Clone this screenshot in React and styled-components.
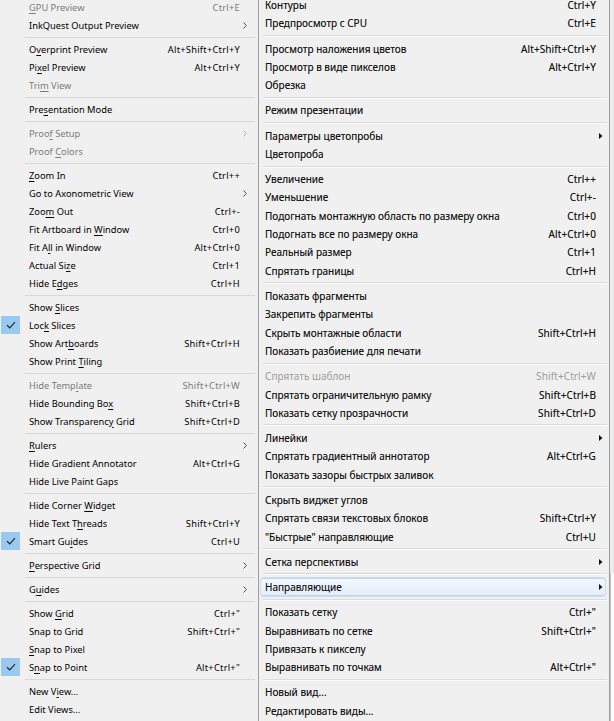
import React from 'react';
import styled, { createGlobalStyle } from 'styled-components';

const GlobalStyle = createGlobalStyle`
  html, body {
    margin: 0;
    padding: 0;
    background: #f0f0f0;
    overflow: hidden;
  }
`;

const SEP = { sep: true };

const leftItems = [
  { label: 'GPU Preview', u: 0, sc: 'Ctrl+E', off: true },
  { label: 'InkQuest Output Preview', sub: true },
  SEP,
  { label: 'Overprint Preview', u: 1, sc: 'Alt+Shift+Ctrl+Y' },
  { label: 'Pixel Preview', u: 2, sc: 'Alt+Ctrl+Y' },
  { label: 'Trim View', u: 3, off: true },
  SEP,
  { label: 'Presentation Mode', u: 3 },
  SEP,
  { label: 'Proof Setup', u: 4, sub: true, off: true },
  { label: 'Proof Colors', u: 6, off: true },
  SEP,
  { label: 'Zoom In', u: 0, sc: 'Ctrl++' },
  { label: 'Go to Axonometric View', sub: true },
  { label: 'Zoom Out', u: 3, sc: 'Ctrl+-' },
  { label: 'Fit Artboard in Window', u: 16, sc: 'Ctrl+0' },
  { label: 'Fit All in Window', u: 5, sc: 'Alt+Ctrl+0' },
  { label: 'Actual Size', u: 9, sc: 'Ctrl+1' },
  { label: 'Hide Edges', u: 6, sc: 'Ctrl+H' },
  SEP,
  { label: 'Show Slices', u: 5 },
  { label: 'Lock Slices', u: 3, checked: true },
  { label: 'Show Artboards', u: 8, sc: 'Shift+Ctrl+H' },
  { label: 'Show Print Tiling', u: 11 },
  SEP,
  { label: 'Hide Template', u: 9, sc: 'Shift+Ctrl+W', off: true },
  { label: 'Hide Bounding Box', u: 16, sc: 'Shift+Ctrl+B' },
  { label: 'Show Transparency Grid', u: 16, sc: 'Shift+Ctrl+D' },
  SEP,
  { label: 'Rulers', u: 0, sub: true },
  { label: 'Hide Gradient Annotator', sc: 'Alt+Ctrl+G' },
  { label: 'Hide Live Paint Gaps' },
  SEP,
  { label: 'Hide Corner Widget', u: 12 },
  { label: 'Hide Text Threads', u: 11, sc: 'Shift+Ctrl+Y' },
  { label: 'Smart Guides', u: 8, sc: 'Ctrl+U', checked: true },
  SEP,
  { label: 'Perspective Grid', u: 0, sub: true },
  SEP,
  { label: 'Guides', u: 1, sub: true },
  SEP,
  { label: 'Show Grid', u: 5, sc: 'Ctrl+"' },
  { label: 'Snap to Grid', sc: 'Shift+Ctrl+"' },
  { label: 'Snap to Pixel', u: 0 },
  { label: 'Snap to Point', u: 1, sc: 'Alt+Ctrl+"', checked: true },
  SEP,
  { label: 'New View...', u: 5 },
  { label: 'Edit Views...' },
];

const rightItems = [
  { label: 'Контуры', sc: 'Ctrl+Y' },
  { label: 'Предпросмотр с CPU', sc: 'Ctrl+E' },
  SEP,
  { label: 'Просмотр наложения цветов', sc: 'Alt+Shift+Ctrl+Y' },
  { label: 'Просмотр в виде пикселов', sc: 'Alt+Ctrl+Y' },
  { label: 'Обрезка' },
  SEP,
  { label: 'Режим презентации' },
  SEP,
  { label: 'Параметры цветопробы', sub: true },
  { label: 'Цветопроба' },
  SEP,
  { label: 'Увеличение', sc: 'Ctrl++' },
  { label: 'Уменьшение', sc: 'Ctrl+-' },
  { label: 'Подогнать монтажную область по размеру окна', sc: 'Ctrl+0' },
  { label: 'Подогнать все по размеру окна', sc: 'Alt+Ctrl+0' },
  { label: 'Реальный размер', sc: 'Ctrl+1' },
  { label: 'Спрятать границы', sc: 'Ctrl+H' },
  SEP,
  { label: 'Показать фрагменты' },
  { label: 'Закрепить фрагменты' },
  { label: 'Скрыть монтажные области', sc: 'Shift+Ctrl+H' },
  { label: 'Показать разбиение для печати' },
  SEP,
  { label: 'Спрятать шаблон', sc: 'Shift+Ctrl+W', off: true },
  { label: 'Спрятать ограничительную рамку', sc: 'Shift+Ctrl+B' },
  { label: 'Показать сетку прозрачности', sc: 'Shift+Ctrl+D' },
  SEP,
  { label: 'Линейки', sub: true },
  { label: 'Спрятать градиентный аннотатор', sc: 'Alt+Ctrl+G' },
  { label: 'Показать зазоры быстрых заливок' },
  SEP,
  { label: 'Скрыть виджет углов' },
  { label: 'Спрятать связи текстовых блоков', sc: 'Shift+Ctrl+Y' },
  { label: '"Быстрые" направляющие', sc: 'Ctrl+U' },
  SEP,
  { label: 'Сетка перспективы', sub: true },
  SEP,
  { label: 'Направляющие', sub: true, active: true },
  SEP,
  { label: 'Показать сетку', sc: 'Ctrl+"' },
  { label: 'Выравнивать по сетке', sc: 'Shift+Ctrl+"' },
  { label: 'Привязать к пикселу' },
  { label: 'Выравнивать по точкам', sc: 'Alt+Ctrl+"' },
  SEP,
  { label: 'Новый вид...' },
  { label: 'Редактировать виды...' },
];

const Frame = styled.div`
  display: flex;
  height: 721px;
  overflow: hidden;
  font-family: 'Noto Sans', 'Open Sans', sans-serif;
`;

/* ---------- left: Windows 10 style menu ---------- */

const LeftMenu = styled.div`
  width: 258px;
  flex-shrink: 0;
  background: #f0f0f0;
`;

const LeftList = styled.div`
  margin-top: -2px;
  display: flex;
  flex-direction: column;
`;

const LeftRow = styled.div`
  display: flex;
  align-items: center;
  height: 18px;
  font-size: 9.3px;
  color: ${({ $off }) => ($off ? '#7c7c7c' : '#000')};
  white-space: nowrap;
`;

const CheckCell = styled.div`
  width: 25px;
  height: 18px;
  flex-shrink: 0;
  display: flex;
  align-items: center;
`;

const CheckBox = styled.div`
  width: 19px;
  height: 18px;
  margin-left: 1px;
  background: #99c9ef;
  display: flex;
  align-items: center;
  justify-content: center;
`;

const LeftLabel = styled.span`
  flex: 1;
  padding-left: 4px;
`;

const LeftShortcut = styled.span`
  text-align: right;
  letter-spacing: 0.25px;
`;

const LeftArrowCell = styled.div`
  width: 18px;
  flex-shrink: 0;
  display: flex;
  align-items: center;
  padding-left: 3px;
  box-sizing: border-box;
`;

const LeftSep = styled.div`
  height: 6px;
  margin: 0 3px 0 25px;
  display: flex;
  align-items: center;
  &::after {
    content: '';
    flex: 1;
    height: 1px;
    background: #d7d7d7;
  }
`;

const Mn = styled.span`
  text-decoration: underline;
  text-underline-offset: 1.5px;
  text-decoration-thickness: 1px;
`;

/* ---------- right: Windows 7 style menu ---------- */

const RightMenu = styled.div`
  width: 352px;
  flex-shrink: 0;
  box-sizing: border-box;
  background: #f0f0f0;
  border-left: 1px solid #9c9c9c;
  border-right: 1px solid #9c9c9c;
`;

const RightList = styled.div`
  margin-top: -4.2px;
  display: flex;
  flex-direction: column;
`;

const RightRow = styled.div`
  display: flex;
  align-items: center;
  height: 18.33px;
  box-sizing: border-box;
  margin: 0 4px 0 2px;
  padding-left: 4px;
  font-size: 10px;
  color: ${({ $off }) => ($off ? '#9d9d9d' : '#141414')};
  text-shadow: ${({ $off }) => ($off ? 'none' : '0 0 0.5px rgba(0, 0, 0, 0.45)')};
  white-space: nowrap;
  border-top: 1px solid ${({ $active }) => ($active ? '#bcd5f1' : 'transparent')};
  border-bottom: 1px solid ${({ $active }) => ($active ? '#bcd5f1' : 'transparent')};
  border-radius: 3px;
  background: ${({ $active }) =>
    $active ? 'linear-gradient(#f4f8fd, #e3edf9)' : 'transparent'};
  box-shadow: ${({ $active }) => ($active ? '0 0 0 1px #c9ddf4' : 'none')};
`;

const RightLabel = styled.span`
  flex: 1;
`;

const RightShortcut = styled.span`
  text-align: right;
  letter-spacing: 0.1px;
`;

const RightArrowCell = styled.div`
  width: 9px;
  flex-shrink: 0;
  display: flex;
  align-items: center;
  padding-left: 3px;
  box-sizing: border-box;
`;

const RightSep = styled.div`
  height: 6.9px;
  margin: 0 2px 0 4px;
  display: flex;
  flex-direction: column;
  justify-content: center;
  &::before {
    content: '';
    height: 1px;
    background: #dcdcdc;
  }
  &::after {
    content: '';
    height: 1px;
    background: #fbfbfb;
  }
`;

const Edge = styled.div`
  flex: 1;
  display: flex;
  flex-direction: column;
`;

const EdgeTop = styled.div`
  height: 573px;
  background: #ececec;
`;

const EdgeBottom = styled.div`
  flex: 1;
  background: #fbfbfb;
  border-left: 1px solid #c4c4c4;
`;

function withMnemonic(label, u) {
  if (u === undefined) return label;
  return (
    <>
      {label.slice(0, u)}
      <Mn>{label[u]}</Mn>
      {label.slice(u + 1)}
    </>
  );
}

function Check() {
  return (
    <svg width="10" height="8" viewBox="0 0 10 8">
      <path d="M1 4.2 L3.8 6.8 L9 1.2" fill="none" stroke="#1c2f48" strokeWidth="1.2" />
    </svg>
  );
}

function Chevron({ off }) {
  return (
    <svg width="4" height="7" viewBox="0 0 4 7">
      <polyline points="0.5,0.5 3.5,3.5 0.5,6.5" fill="none" stroke={off ? '#b0b0b0' : '#505050'} strokeWidth="1" />
    </svg>
  );
}

function Triangle() {
  return (
    <svg width="4" height="6" viewBox="0 0 4 6">
      <polygon points="0,0 3.5,3 0,6" fill="#111" />
    </svg>
  );
}

function LeftMenuList() {
  return (
    <LeftMenu>
      <LeftList>
        {leftItems.map((it, i) =>
          it.sep ? (
            <LeftSep key={i} />
          ) : (
            <LeftRow key={i} $off={it.off}>
              <CheckCell>
                {it.checked && (
                  <CheckBox>
                    <Check />
                  </CheckBox>
                )}
              </CheckCell>
              <LeftLabel>{withMnemonic(it.label, it.u)}</LeftLabel>
              {it.sc && <LeftShortcut>{it.sc}</LeftShortcut>}
              <LeftArrowCell>{it.sub && <Chevron off={it.off} />}</LeftArrowCell>
            </LeftRow>
          )
        )}
      </LeftList>
    </LeftMenu>
  );
}

function RightMenuList() {
  return (
    <RightMenu>
      <RightList>
        {rightItems.map((it, i) =>
          it.sep ? (
            <RightSep key={i} />
          ) : (
            <RightRow key={i} $off={it.off} $active={it.active}>
              <RightLabel>{it.label}</RightLabel>
              {it.sc && <RightShortcut>{it.sc}</RightShortcut>}
              <RightArrowCell>{it.sub && <Triangle />}</RightArrowCell>
            </RightRow>
          )
        )}
      </RightList>
    </RightMenu>
  );
}

export default function App() {
  return (
    <>
      <GlobalStyle />
      <Frame>
        <LeftMenuList />
        <RightMenuList />
        <Edge>
          <EdgeTop />
          <EdgeBottom />
        </Edge>
      </Frame>
    </>
  );
}
